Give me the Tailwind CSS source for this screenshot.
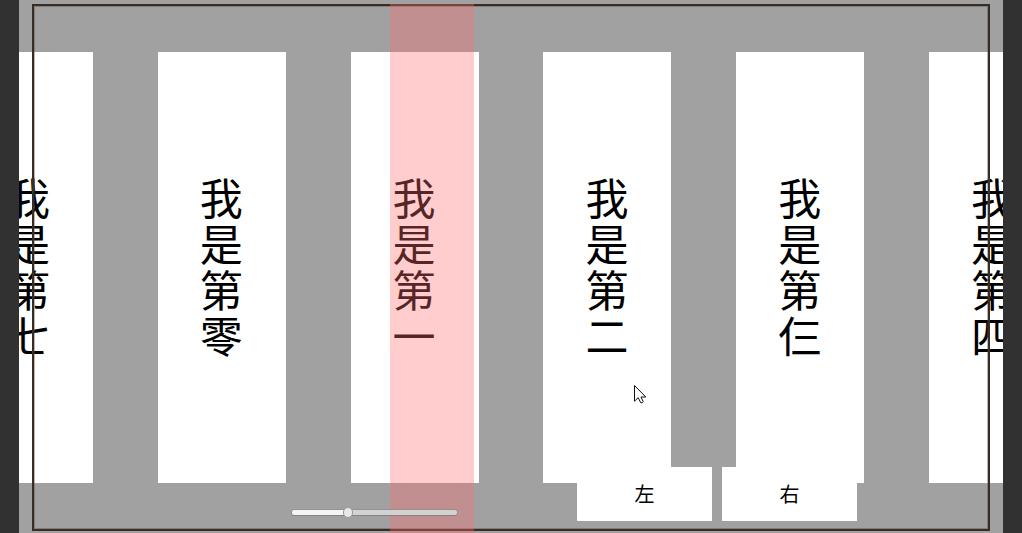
<!DOCTYPE html>
<html lang="zh-Hant">
<head>
<meta charset="utf-8">
<meta name="viewport" content="width=device-width, initial-scale=1">
<title>Carousel</title>
<script src="https://cdn.jsdelivr.net/npm/@tailwindcss/browser@4"></script>
</head>
<body class="flex h-screen overflow-hidden bg-[#313131] px-[19px] font-['Noto_Sans_CJK_SC',sans-serif] text-black">
  <main class="relative flex min-w-0 flex-1 overflow-hidden bg-[#a1a1a1] pt-[52px] pb-[50px]">
    <!-- Card strip: runs past both edges -->
    <ul class="-mx-[54px] flex flex-1 justify-between text-[43px] leading-[46px]">
      <li class="flex w-32 shrink-0 justify-center bg-white pt-[121px]"><p class="w-11 break-all">我是第七</p></li>
      <li class="flex w-32 shrink-0 justify-center bg-white pt-[121px]"><p class="w-11 break-all">我是第零</p></li>
      <li class="flex w-32 shrink-0 justify-center bg-white pt-[121px]"><p class="w-11 break-all">我是第一</p></li>
      <li class="flex w-32 shrink-0 justify-center bg-white pt-[121px]"><p class="w-11 break-all">我是第二</p></li>
      <li class="flex w-32 shrink-0 justify-center bg-white pt-[121px]"><p class="w-11 break-all">我是第仨</p></li>
      <li class="flex w-32 shrink-0 justify-center bg-white pt-[121px]"><p class="w-11 break-all">我是第四</p></li>
    </ul>

    <!-- Viewport frame -->
    <div class="pointer-events-none absolute top-1 right-[13px] bottom-[2px] left-[13px] border-2 border-[#382d23] inset-ring inset-ring-[#554840]/40"></div>
    <!-- Selection band -->
    <div class="pointer-events-none absolute top-1 bottom-0 left-[371px] w-[84px] bg-[#ff6c6c]/34"></div>

    <!-- Controls -->
    <div class="absolute right-[146px] bottom-3 left-[273px] flex items-end justify-between">
      <input type="range" min="0" max="100" value="33" aria-label="位置" class="mb-1 h-[10px] w-[165px] appearance-none bg-transparent [&::-webkit-slider-runnable-track]:h-[5px] [&::-webkit-slider-runnable-track]:rounded-xs [&::-webkit-slider-runnable-track]:bg-linear-to-r [&::-webkit-slider-runnable-track]:from-[#f3f5f4] [&::-webkit-slider-runnable-track]:from-33% [&::-webkit-slider-runnable-track]:to-[#d0d3d1] [&::-webkit-slider-runnable-track]:to-33% [&::-webkit-slider-runnable-track]:shadow-[0_0_0_1px_#77777755,0_1px_0_#77777788] [&::-webkit-slider-thumb]:-mt-[3px] [&::-webkit-slider-thumb]:h-[11px] [&::-webkit-slider-thumb]:w-[10px] [&::-webkit-slider-thumb]:appearance-none [&::-webkit-slider-thumb]:rounded-full [&::-webkit-slider-thumb]:border [&::-webkit-slider-thumb]:border-[#999999] [&::-webkit-slider-thumb]:bg-[#e8e8e8]">
      <div class="flex gap-[10px] text-xl">
        <button type="button" class="h-[54px] w-[135px] bg-white">左</button>
        <button type="button" class="h-[54px] w-[135px] bg-white">右</button>
      </div>
    </div>

    <!-- Mouse pointer -->
    <svg class="pointer-events-none absolute top-[384px] left-[615px] h-[21px] w-[13px]" viewBox="0 0 13 21" fill="#fff" stroke="#111" stroke-width="1" aria-hidden="true">
      <path d="M.5 1.5V17.2L4.2 13.7L6.7 18.7Q8.1 19.6 9.2 17.7L7 13H11.8Z"/>
    </svg>
  </main>
</body>
</html>
